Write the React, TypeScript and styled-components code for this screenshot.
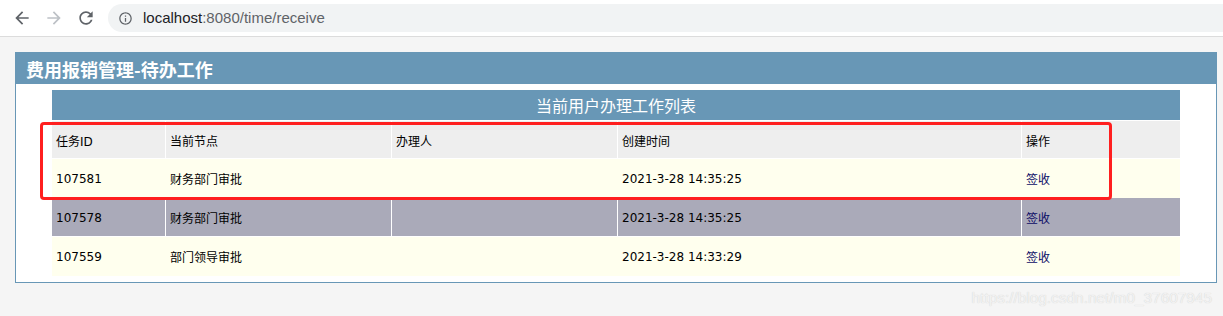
import React from "react";
import styled, { createGlobalStyle } from "styled-components";

const GlobalStyle = createGlobalStyle`
  html, body {
    margin: 0;
    padding: 0;
    background: #f5f5f5;
  }
  #root {
    min-height: 316px;
  }
`;

const Root = styled.div`
  position: relative;
  width: 1223px;
  min-height: 316px;
  overflow: hidden;
  background: #f5f5f5;
`;

const BrowserBar = styled.div`
  display: flex;
  align-items: center;
  height: 36px;
  background: #ffffff;
  border-bottom: 1px solid #dcdcdc;
  padding-left: 6px;
  box-sizing: content-box;
`;

const NavButton = styled.div<{ $disabled?: boolean }>`
  width: 32px;
  height: 32px;
  display: flex;
  align-items: center;
  justify-content: center;
  color: ${(p) => (p.$disabled ? "#bdc1c6" : "#5f6368")};
`;

const UrlBox = styled.div`
  flex: 1;
  margin-left: 6px;
  height: 28px;
  background: #f1f3f4;
  border-radius: 14px 0 0 14px;
  display: flex;
  align-items: center;
  padding-left: 10px;
  gap: 10px;
  color: #5f6368;
`;

const UrlText = styled.span`
  font-family: "Liberation Sans", Arial, sans-serif;
  font-size: 15px;
  color: #5f6368;
  line-height: 1;
  margin-top: -1px;
`;

const Host = styled.span`
  color: #202124;
`;

const Page = styled.div`
  padding: 15px 6px 0 15px;
`;

const Panel = styled.div`
  border: 1px solid #6897b6;
  background: #ffffff;
  padding-bottom: 6px;
`;

const PanelTitle = styled.div`
  height: 31px;
  background: #6897b6;
  color: #ffffff;
  display: flex;
  align-items: center;
  padding-left: 10px;
  font-family: "Noto Sans CJK SC", "Noto Sans", sans-serif;
  font-weight: bold;
  font-size: 18px;
`;

const Table = styled.table`
  width: 94%;
  margin: 6px auto 0;
  border-collapse: separate;
  border-spacing: 0;
  table-layout: fixed;
  background: #ffffff;
  font-family: "DejaVu Sans", "Noto Sans CJK SC", sans-serif;
  font-size: 12px;
  color: #000000;
`;

const Caption = styled.caption`
  height: 30px;
  line-height: 30px;
  background: #6897b6;
  color: #ffffff;
  font-family: "Noto Sans CJK SC", "Noto Sans", sans-serif;
  font-size: 16px;
  text-align: center;
`;

type Tone = "head" | "light" | "gray";

const toneBg: Record<Tone, string> = {
  head: "#eeeeee",
  gray: "#aaaab9",
  light: "#ffffee",
};

const toneLine: Record<Tone, string> = {
  head: "#ffffff",
  gray: "#ffffff",
  light: "#ffffee",
};

const Row = styled.tr<{ $tone: Tone }>`
  background: ${(p) => toneBg[p.$tone]};
`;

const Cell = styled.td<{ $w: number; $tone: Tone; $last?: boolean }>`
  width: ${(p) => p.$w}px;
  height: 39px;
  padding: ${(p) => (p.$tone === "head" ? "2px 4px 0" : "1px 4px 0")};
  box-sizing: border-box;
  vertical-align: middle;
  text-align: left;
  white-space: nowrap;
  border-top: ${(p) => (p.$tone === "head" ? "1px solid #ffffff" : "0")};
  border-bottom: 1px solid ${(p) => toneLine[p.$tone]};
  border-right: ${(p) => (p.$last ? "0" : `1px solid ${toneLine[p.$tone]}`)};
`;

const Action = styled.a`
  color: #0c0c66;
  text-decoration: none;
  cursor: pointer;
`;

const Annotation = styled.div`
  position: absolute;
  left: 40px;
  top: 122px;
  width: 1072px;
  height: 78px;
  box-sizing: border-box;
  border: 3px solid #ff1f1f;
  border-radius: 4px;
  pointer-events: none;
`;

const Watermark = styled.div`
  position: absolute;
  right: 11px;
  top: 289px;
  font-family: "Liberation Sans", Arial, sans-serif;
  font-size: 15.4px;
  color: #f2f2f2;
  text-shadow: 0 0 1px #cccccc;
  pointer-events: none;
`;

const widths = [114, 226, 226, 404, 158];
const headers = ["任务ID", "当前节点", "办理人", "创建时间", "操作"];

type Task = { id: string; node: string; user: string; time: string };

const tasks: Task[] = [
  { id: "107581", node: "财务部门审批", user: "", time: "2021-3-28 14:35:25" },
  { id: "107578", node: "财务部门审批", user: "", time: "2021-3-28 14:35:25" },
  { id: "107559", node: "部门领导审批", user: "", time: "2021-3-28 14:33:29" },
];

const BackIcon = () => (
  <svg width="20" height="20" viewBox="0 0 24 24" fill="currentColor">
    <path d="M20 11H7.83l5.59-5.59L12 4l-8 8 8 8 1.41-1.41L7.83 13H20v-2z" />
  </svg>
);

const ForwardIcon = () => (
  <svg width="20" height="20" viewBox="0 0 24 24" fill="currentColor">
    <path d="M12 4l-1.41 1.41L16.17 11H4v2h12.17l-5.58 5.59L12 20l8-8z" />
  </svg>
);

const ReloadIcon = () => (
  <svg width="20" height="20" viewBox="0 0 24 24" fill="currentColor">
    <path d="M17.65 6.35C16.2 4.9 14.21 4 12 4c-4.42 0-7.99 3.58-7.99 8s3.57 8 7.99 8c3.73 0 6.84-2.55 7.73-6h-2.08c-.82 2.33-3.04 4-5.650 4-3.31 0-6-2.69-6-6s2.69-6 6-6c1.66 0 3.14.69 4.22 1.78L13 11h7V4l-2.35 2.35z" />
  </svg>
);

const InfoIcon = () => (
  <svg width="15" height="15" viewBox="0 0 24 24" fill="currentColor">
    <path d="M11 7h2v2h-2zm0 4h2v6h-2zm1-9C6.48 2 2 6.48 2 12s4.48 10 10 10 10-4.48 10-10S17.52 2 12 2zm0 18c-4.41 0-8-3.59-8-8s3.59-8 8-8 8 3.59 8 8-3.59 8-8 8z" />
  </svg>
);

export default function App() {
  return (
    <Root>
      <GlobalStyle />
      <BrowserBar>
        <NavButton>
          <BackIcon />
        </NavButton>
        <NavButton $disabled>
          <ForwardIcon />
        </NavButton>
        <NavButton>
          <ReloadIcon />
        </NavButton>
        <UrlBox>
          <InfoIcon />
          <UrlText>
            <Host>localhost</Host>:8080/time/receive
          </UrlText>
        </UrlBox>
      </BrowserBar>
      <Page>
        <Panel>
          <PanelTitle>费用报销管理-待办工作</PanelTitle>
          <Table>
            <Caption>当前用户办理工作列表</Caption>
            <tbody>
              <Row $tone="head">
                {headers.map((h, i) => (
                  <Cell key={h} $w={widths[i]} $tone="head" $last={i === 4}>
                    {h}
                  </Cell>
                ))}
              </Row>
              {tasks.map((t, idx) => {
                const tone: Tone = idx % 2 === 1 ? "gray" : "light";
                return (
                  <Row key={t.id} $tone={tone}>
                    <Cell $w={widths[0]} $tone={tone}>{t.id}</Cell>
                    <Cell $w={widths[1]} $tone={tone}>{t.node}</Cell>
                    <Cell $w={widths[2]} $tone={tone}>{t.user}</Cell>
                    <Cell $w={widths[3]} $tone={tone}>{t.time}</Cell>
                    <Cell $w={widths[4]} $tone={tone} $last>
                      <Action>签收</Action>
                    </Cell>
                  </Row>
                );
              })}
            </tbody>
          </Table>
        </Panel>
      </Page>
      <Annotation />
      <Watermark>https://blog.csdn.net/m0_37607945</Watermark>
    </Root>
  );
}
